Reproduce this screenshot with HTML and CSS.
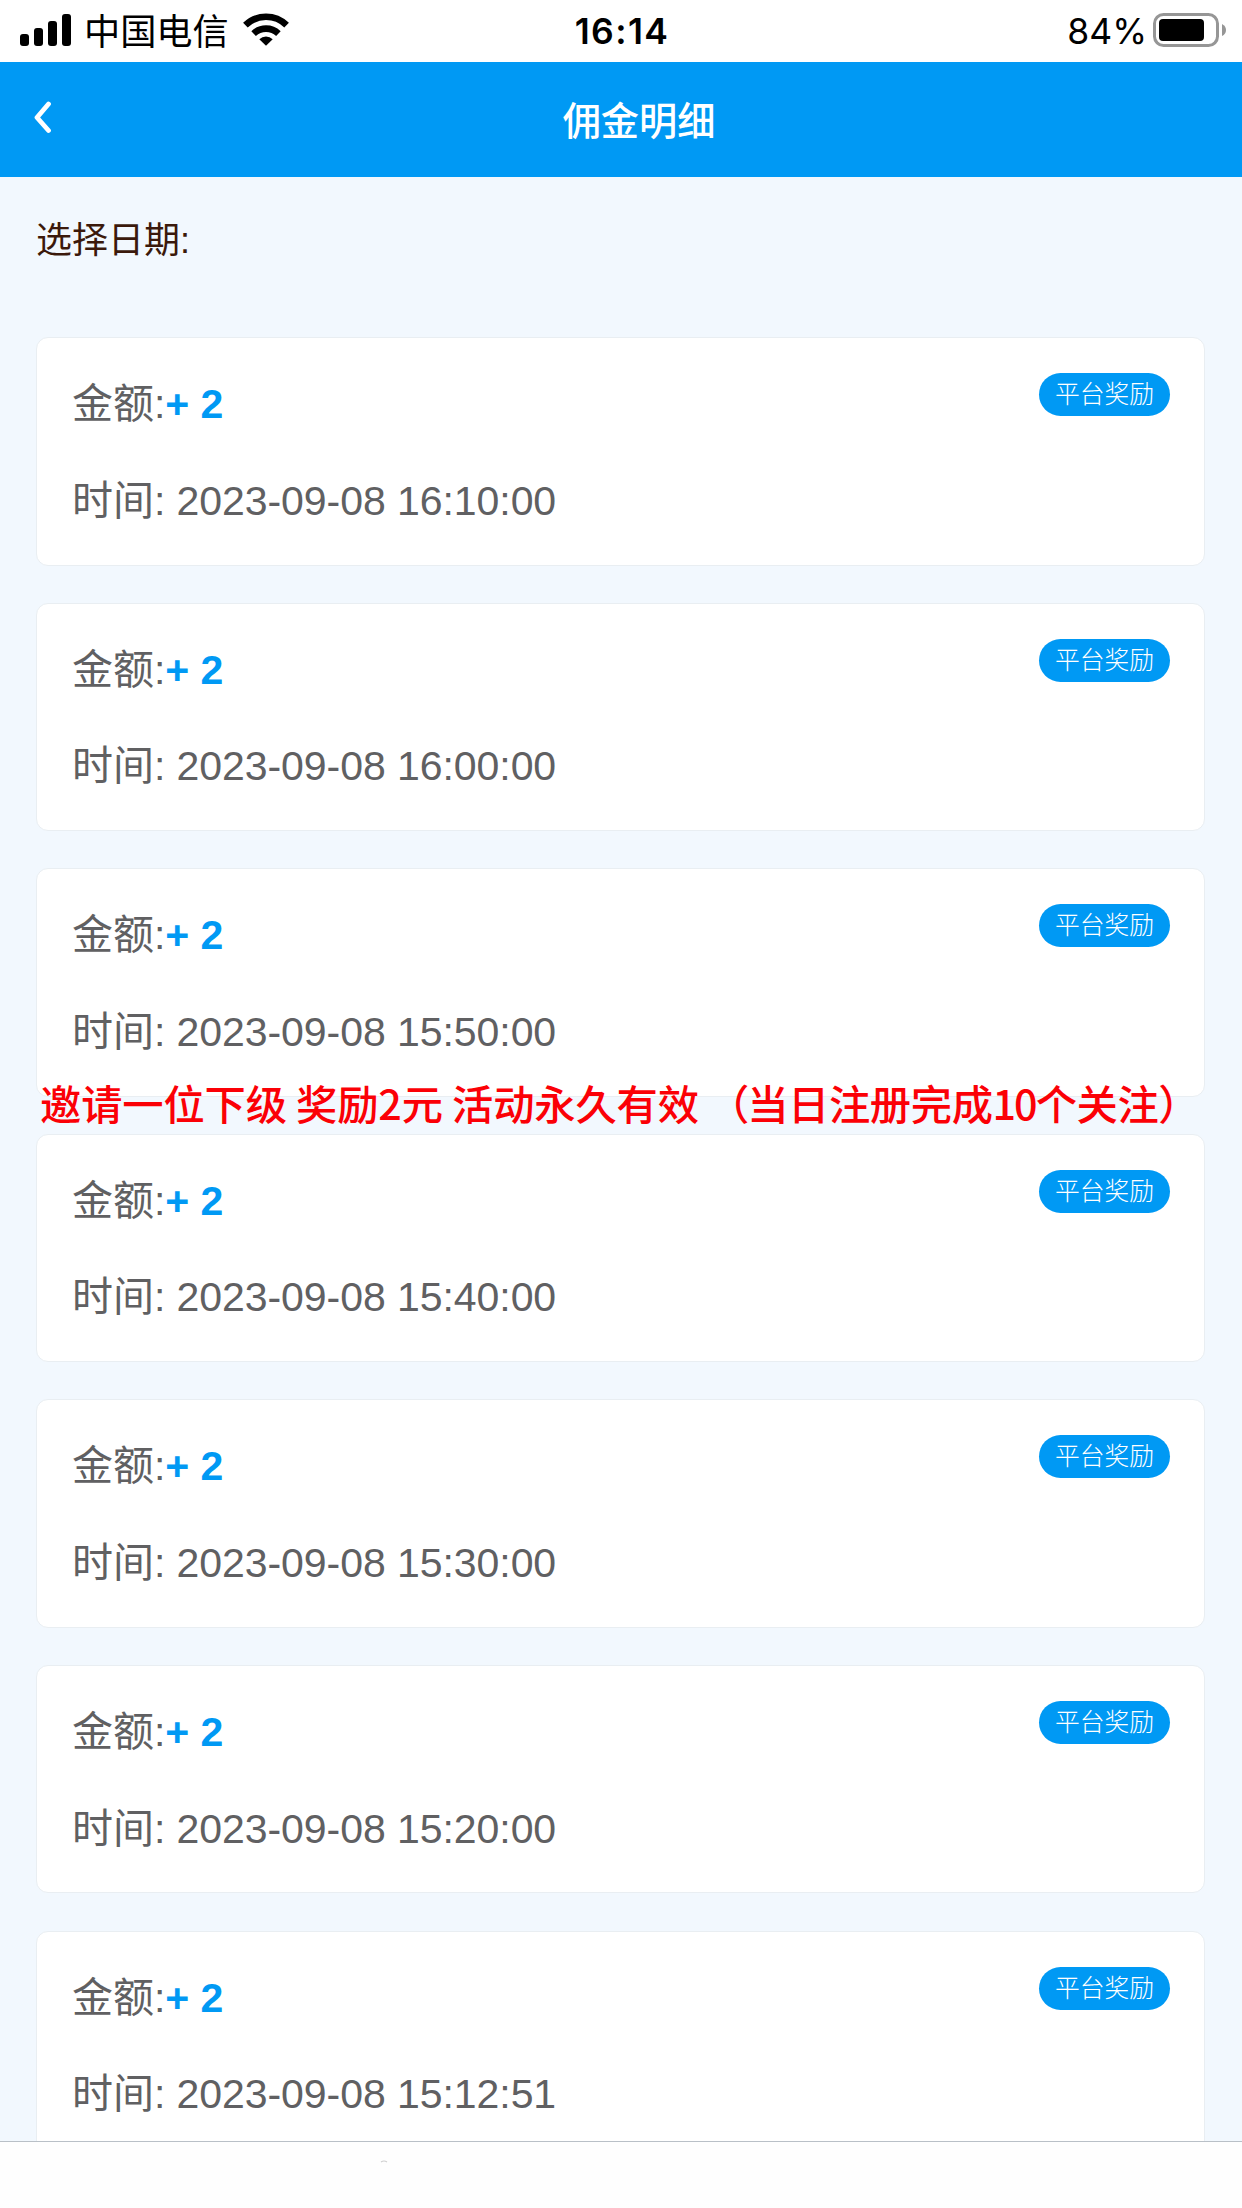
FILE: index.html
```html
<!DOCTYPE html>
<html lang="zh-CN">
<head>
<meta charset="utf-8">
<title>佣金明细</title>
<link rel="stylesheet" href="styles.css">
</head>
<body>
<div class="app">
  <div class="status">
    <div class="status-left">
      <svg class="signal" width="52" height="33" viewBox="0 0 52 33"><rect x="0" y="20" width="9" height="12" rx="3"/><rect x="14" y="14" width="9" height="18" rx="3"/><rect x="28" y="7" width="9" height="25" rx="3"/><rect x="42" y="0" width="9" height="32" rx="3"/></svg>
      <span class="carrier">中国电信</span>
      <svg class="wifi" width="46" height="34" viewBox="0 0 46 34"><g fill="none" stroke="#000" stroke-width="6.6"><path d="M2.4 12.2A29.5 29.5 0 0 1 43.6 12.2"/><path d="M10.6 20.6A18 18 0 0 1 35.4 20.6"/></g><path d="M16.3 26.2A10 10 0 0 1 29.7 26.2L23 32.8Z"/></svg>
    </div>
    <span class="clock">16:14</span>
    <div class="status-right">
      <span class="percent">84%</span>
      <svg class="battery" width="74" height="35" viewBox="0 0 74 35"><rect x="1.5" y="1.5" width="63" height="31" rx="9" fill="none" stroke="#969696" stroke-width="3"/><rect x="6" y="6" width="45" height="22" rx="4"/><path d="M69 11Q73 13 73 17T69 23Z" fill="#969696"/></svg>
    </div>
  </div>
  <header class="nav">
    <svg class="back" width="18" height="34" viewBox="0 0 18 34"><path d="M14.5 3L3 16.5L14.5 29.5" fill="none" stroke="#fff" stroke-width="4.8" stroke-linecap="round" stroke-linejoin="round"/></svg>
    <h1 class="title">佣金明细</h1>
  </header>
  <main class="content">
    <div class="filter">选择日期:</div>
    <div class="list">
      <section class="card"><div class="info"><div class="row">金额:<b class="amount">+ 2</b></div><div class="row">时间: 2023-09-08 16:10:00</div></div><span class="badge">平台奖励</span></section>
      <section class="card"><div class="info"><div class="row">金额:<b class="amount">+ 2</b></div><div class="row">时间: 2023-09-08 16:00:00</div></div><span class="badge">平台奖励</span></section>
      <section class="card"><div class="info"><div class="row">金额:<b class="amount">+ 2</b></div><div class="row">时间: 2023-09-08 15:50:00</div></div><span class="badge">平台奖励</span></section>
      <section class="card"><div class="info"><div class="row">金额:<b class="amount">+ 2</b></div><div class="row">时间: 2023-09-08 15:40:00</div></div><span class="badge">平台奖励</span></section>
      <section class="card"><div class="info"><div class="row">金额:<b class="amount">+ 2</b></div><div class="row">时间: 2023-09-08 15:30:00</div></div><span class="badge">平台奖励</span></section>
      <section class="card"><div class="info"><div class="row">金额:<b class="amount">+ 2</b></div><div class="row">时间: 2023-09-08 15:20:00</div></div><span class="badge">平台奖励</span></section>
      <section class="card"><div class="info"><div class="row">金额:<b class="amount">+ 2</b></div><div class="row">时间: 2023-09-08 15:12:51</div></div><span class="badge">平台奖励</span></section>
    </div>
  </main>
  <footer class="bottom"><svg width="100" height="6" viewBox="0 0 100 6"><path d="M1 3Q4 1 7 3" fill="none" stroke="#cfcfcf" stroke-width="1.2"/></svg></footer>
  <div class="notice">邀请一位下级 奖励2元 活动永久有效 （<span class="condition">当日注册完成<span class="count">10</span>个关注）</span></div>
</div>
</body>
</html>
```
FILE: styles.css
```css
* { box-sizing: border-box; }
body { margin: 0; background: #fff; }
.app {
  position: relative;
  display: flex;
  flex-direction: column;
  width: 1242px;
  height: 2208px;
  overflow: hidden;
  font-family: "Liberation Sans", "Noto Sans CJK SC", sans-serif;
}
.status {
  flex: none;
  display: grid;
  grid-template-columns: 1fr auto 1fr;
  align-items: center;
  height: 62px;
  padding: 0 15px 0 20px;
  color: #000;
}
.status-left, .status-right { display: flex; align-items: center; }
.status-right { justify-content: flex-end; }
.signal { margin-top: -1px; }
.carrier { margin: -4px 0 0 12px; font: 36.2px/60px "Noto Sans CJK SC", sans-serif; }
.wifi { margin: -3px 0 0 14px; }
.clock { padding-top: 2px; font: 600 35.5px/60px Inter, sans-serif; letter-spacing: 1.4px; margin-left: -3px; }
.percent { padding-top: 2px; font: 35.5px/60px Inter, sans-serif; }
.battery { margin: -1px 0 0 6px; }
.nav {
  flex: none;
  display: flex;
  align-items: center;
  height: 115px;
  padding: 0 34px;
  background: #0099f4;
}
.back { margin-top: -4px; }
.title {
  flex: 1;
  margin: -2px 0 0 18px;
  text-align: center;
  color: #fff;
  font: 500 38.2px/60px "Noto Sans CJK SC", sans-serif;
}
.content {
  flex: 1;
  min-height: 0;
  overflow: hidden;
  padding: 0 37px 0 36px;
  background: #f2f8fe;
}
.filter {
  height: 160px;
  padding-top: 34px;
  color: #3b190b;
  font-size: 36px;
  line-height: 60px;
}
.list { display: flex; flex-direction: column; gap: 37.1px; }
.card {
  flex: none;
  display: flex;
  justify-content: space-between;
  align-items: flex-start;
  height: 228.5px;
  padding: 34px 34px 0 35px;
  border: 1px solid #e9eef2;
  border-radius: 12px;
  background: #fff;
}
.row {
  height: 96.7px;
  color: #606062;
  font-size: 41px;
  line-height: 64px;
  letter-spacing: -0.06px;
  white-space: pre;
}
.amount { color: #0099f4; }
.badge {
  display: flex;
  align-items: center;
  justify-content: center;
  width: 131px;
  height: 43px;
  margin-top: 1px;
  padding-bottom: 4px;
  border-radius: 22px;
  background: #0099f4;
  color: #fff;
  font: 300 24.8px/39px "Noto Sans CJK SC", sans-serif;
}
.bottom {
  flex: none;
  height: 67px;
  padding: 17px 380px 0;
  border-top: 1px solid #b9c0c7;
  background: #fefefe;
  line-height: 0;
}
.notice {
  position: absolute;
  left: 40px;
  top: 1072px;
  color: #fb0006;
  font: 500 41.3px/60px "Noto Sans CJK SC", sans-serif;
  letter-spacing: -0.15px;
  white-space: nowrap;
}
.condition { margin-left: -2px; letter-spacing: -0.4px; }
.count { letter-spacing: -2px; }
```
